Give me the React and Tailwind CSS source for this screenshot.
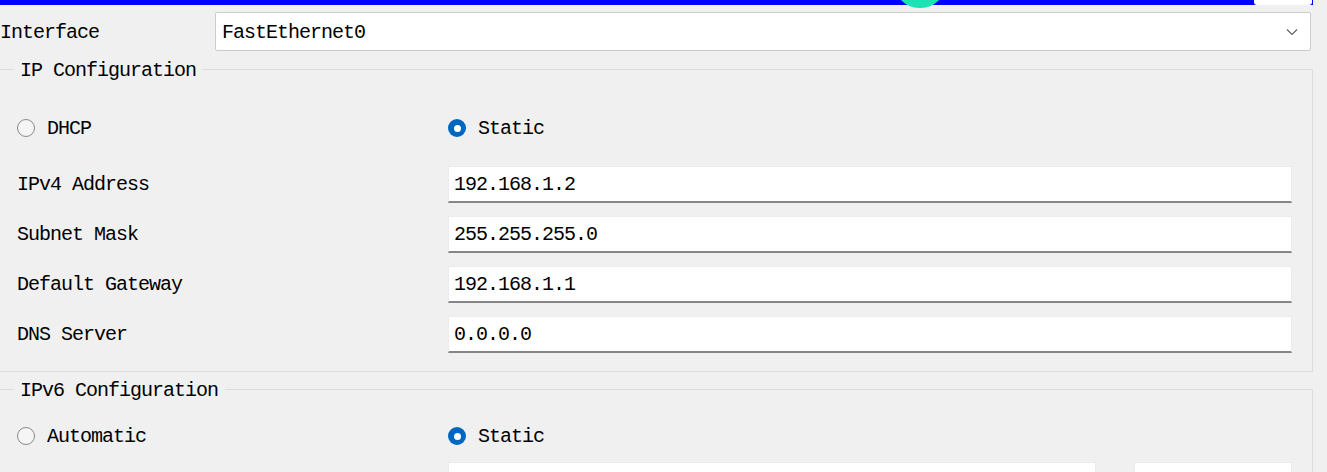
import React from 'react';

const font = { fontFamily: '"Liberation Mono", "DejaVu Sans Mono", monospace' };

const Radio = ({ checked, label }) => (
  <div className="flex items-center gap-[12px]">
    {checked ? (
      <span className="w-[18px] h-[18px] rounded-full bg-[#0067c0] flex items-center justify-center">
        <span className="w-[7px] h-[7px] rounded-full bg-white" />
      </span>
    ) : (
      <span className="w-[18px] h-[18px] rounded-full border border-[#8a8a8a] bg-[#f5f5f5]" />
    )}
    <span className="pt-[2px]">{label}</span>
  </div>
);

const TextBox = ({ value, className = '' }) => (
  <div
    className={`h-[37px] bg-white border border-[#ececec] border-b-2 border-b-[#868686] flex items-center pl-[5px] pt-[2px] ${className}`}
  >
    {value}
  </div>
);

const FieldRow = ({ label, value }) => (
  <div className="flex items-center h-[37px]">
    <div className="w-[431px] pt-[1px]">{label}</div>
    <TextBox value={value} className="w-[844px]" />
  </div>
);

const Group = ({ title, children, className = '' }) => (
  <fieldset className={`w-[1313px] border border-l-0 border-[#dcdcdc] ${className}`}>
    <legend className="ml-[13px] px-[7px] leading-[22px] pt-[3px]">{title}</legend>
    <div className="pl-[17px] pr-[20px]">{children}</div>
  </fieldset>
);

export default function App() {
  return (
    <div
      className="w-[1327px] h-[472px] bg-[#f0f0f0] text-black text-[20px] tracking-[-1px] overflow-hidden"
      style={font}
    >
      {/* window title strip */}
      <div className="relative w-[1313px] h-[5px] bg-[#0000ff]">
        <div className="absolute left-[895px] top-[-40px] w-[50px] h-[48px] rounded-full bg-[#1de3b4]" />
        <div className="absolute left-[1254px] top-[-4px] w-[58px] h-[9px] rounded-[3px] bg-white" />
      </div>

      <div className="flex items-center mt-[7px] h-[39px]">
        <div className="w-[215px] pt-[3px]">Interface</div>
        <div className="w-[1096px] h-[39px] bg-white border border-[#cccccc] rounded-[2px] flex items-center justify-between pl-[6px] pr-[12px]">
          <span className="pt-[3px]">FastEthernet0</span>
          <svg width="12" height="8" viewBox="0 0 12 8" fill="none">
            <path d="M1 1.5 L6 6.5 L11 1.5" stroke="#5f5f5f" strokeWidth="1.1" />
          </svg>
        </div>
      </div>

      <Group title="IP Configuration" className="mt-[6px] pb-[18px]">
        <div className="flex items-center h-[38px] mt-[27px]">
          <div className="w-[431px]">
            <Radio label="DHCP" />
          </div>
          <Radio checked label="Static" />
        </div>
        <div className="flex flex-col gap-[13px] mt-[19px]">
          <FieldRow label="IPv4 Address" value="192.168.1.2" />
          <FieldRow label="Subnet Mask" value="255.255.255.0" />
          <FieldRow label="Default Gateway" value="192.168.1.1" />
          <FieldRow label="DNS Server" value="0.0.0.0" />
        </div>
      </Group>

      <Group title="IPv6 Configuration" className="mt-[5px] pb-[18px]">
        <div className="flex items-center h-[38px] mt-[15px]">
          <div className="w-[431px]">
            <Radio label="Automatic" />
          </div>
          <Radio checked label="Static" />
        </div>
        <div className="flex items-center mt-[7px]">
          <div className="w-[431px]" />
          <TextBox value="" className="w-[648px]" />
          <div className="w-[38px]" />
          <TextBox value="" className="w-[158px]" />
        </div>
      </Group>
    </div>
  );
}
